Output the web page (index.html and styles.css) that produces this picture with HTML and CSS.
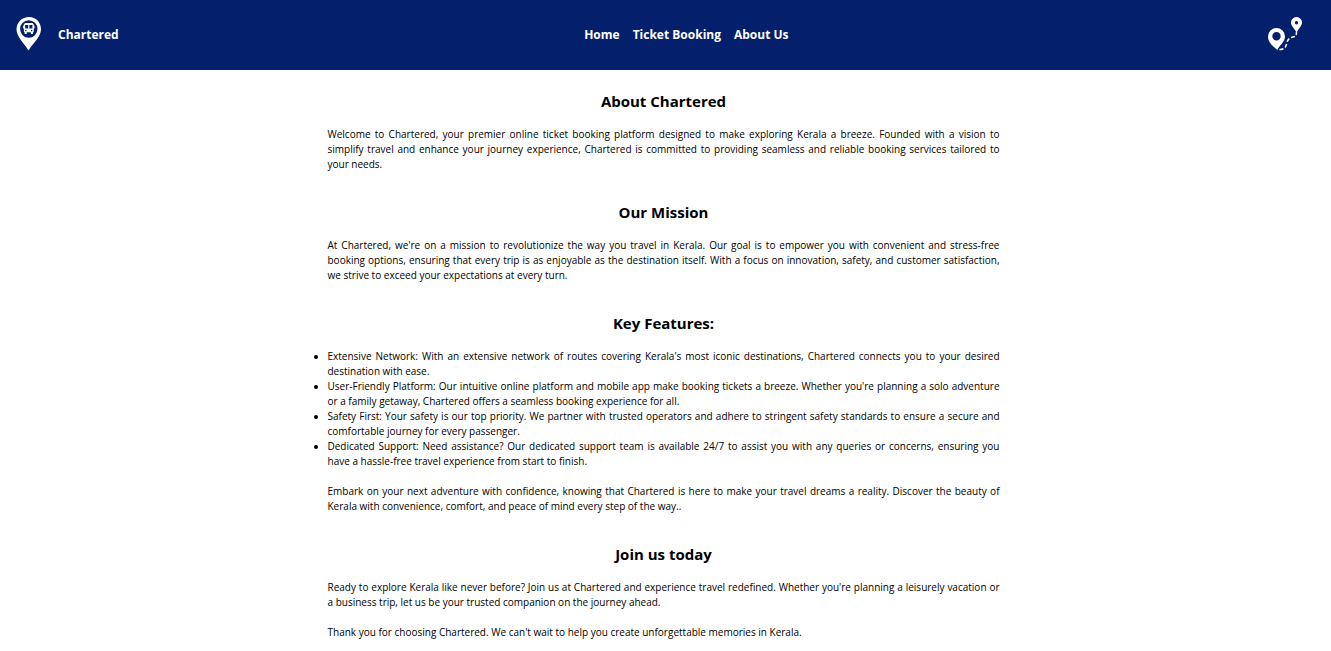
FILE: index.html
```html
<!DOCTYPE html>
<html lang="en">
<head>
<meta charset="utf-8">
<meta name="viewport" content="width=device-width, initial-scale=1">
<title>About Chartered</title>
<link rel="stylesheet" href="styles.css">
</head>
<body>
<header class="topbar">
  <a class="brand" href="#">
    <svg class="brand-icon" viewBox="0 0 26 34" aria-hidden="true">
      <path fill="#fff" fill-rule="evenodd" d="M13 0C6 0 .5 5.500 .5 12.300C.5 20 8 26 12.500 33.500C17 26 25 20 25 12.300C25 5.500 20 0 13 0ZM12.800 3.300a8.700 8.700 0 1 1 0 17.400a8.700 8.700 0 1 1 0-17.400Z"/>
      <path fill="#fff" fill-rule="evenodd" d="M9.200 6h7.200l1.300 1.200v1.300h.8v3h-.8v3.700h-.8V17h-2v-1.700h-4.200V17h-2v-1.800h-.8v-3.700h-.8v-3h.8V7.200ZM9.200 8v3.500h3V8ZM13.400 8v3.500h3V8ZM9.200 13v1.200h1.300V13ZM15 13v1.200h1.300V13Z"/>
    </svg>
    <span>Chartered</span>
  </a>
  <nav class="links">
    <a href="#">Home</a>
    <a href="#">Ticket Booking</a>
    <a href="#">About Us</a>
  </nav>
  <div class="route">
    <svg class="route-icon" viewBox="0 0 36 34" aria-hidden="true">
      <path fill="#fff" fill-rule="evenodd" d="M28.500 0a5.600 5.600 0 0 1 5.600 5.600C34.100 9 30 12 28.600 16C27 12 22.900 9 22.900 5.600A5.600 5.600 0 0 1 28.500 0ZM28.500 4a1.700 1.700 0 1 0 0 3.400a1.700 1.700 0 0 0 0-3.400Z"/>
      <path fill="#fff" fill-rule="evenodd" d="M8.500 11a8.500 8.500 0 0 1 8.500 8.500C17 25 11 28.500 9.500 33C4.500 29.500 0 25 0 19.500A8.500 8.500 0 0 1 8.500 11ZM8.500 15a4.200 4.200 0 1 0 0 8.400a4.200 4.200 0 0 0 0-8.400Z"/>
      <path fill="none" stroke="#fff" stroke-width="1.500" stroke-dasharray="4 2" d="M11.500 32.500C17 32.500 18 29.500 18.500 27C19.500 22 22 20.500 25 20C28 19.500 28.500 18 28.500 15"/>
    </svg>
  </div>
</header>
<main class="content">
  <section>
    <h2>About Chartered</h2>
    <p>Welcome to Chartered, your premier online ticket booking platform designed to make exploring Kerala a breeze. Founded with a vision to simplify travel and enhance your journey experience, Chartered is committed to providing seamless and reliable booking services tailored to your needs.</p>
  </section>
  <section>
    <h2>Our Mission</h2>
    <p>At Chartered, we're on a mission to revolutionize the way you travel in Kerala. Our goal is to empower you with convenient and stress-free booking options, ensuring that every trip is as enjoyable as the destination itself. With a focus on innovation, safety, and customer satisfaction, we strive to exceed your expectations at every turn.</p>
  </section>
  <section>
    <h2>Key Features:</h2>
    <ul>
      <li>Extensive Network: With an extensive network of routes covering Kerala's most iconic destinations, Chartered connects you to your desired destination with ease.</li>
      <li>User-Friendly Platform: Our intuitive online platform and mobile app make booking tickets a breeze. Whether you're planning a solo adventure or a family getaway, Chartered offers a seamless booking experience for all.</li>
      <li>Safety First: Your safety is our top priority. We partner with trusted operators and adhere to stringent safety standards to ensure a secure and comfortable journey for every passenger.</li>
      <li>Dedicated Support: Need assistance? Our dedicated support team is available 24/7 to assist you with any queries or concerns, ensuring you have a hassle-free travel experience from start to finish.</li>
    </ul>
    <p>Embark on your next adventure with confidence, knowing that Chartered is here to make your travel dreams a reality. Discover the beauty of Kerala with convenience, comfort, and peace of mind every step of the way..</p>
  </section>
  <section>
    <h2>Join us today</h2>
    <p>Ready to explore Kerala like never before? Join us at Chartered and experience travel redefined. Whether you're planning a leisurely vacation or a business trip, let us be your trusted companion on the journey ahead.</p>
    <p>Thank you for choosing Chartered. We can't wait to help you create unforgettable memories in Kerala.</p>
  </section>
</main>
</body>
</html>
```
FILE: styles.css
```css
* {
  box-sizing: border-box;
  margin: 0;
  padding: 0;
}

body {
  background: #fff;
  color: #000;
  font-family: "Open Sans", "Noto Sans", sans-serif;
  font-size: 10px;
  line-height: 15px;
}

.topbar {
  display: flex;
  justify-content: space-between;
  align-items: center;
  padding: 17px 14px 19px 16px;
  background: #04206c;
  color: #fff;
  font-size: 12px;
  font-weight: 700;
}

.topbar a {
  color: inherit;
  text-decoration: none;
}

.topbar .brand {
  display: flex;
  align-items: center;
  gap: 16px;
}

.brand-icon {
  width: 26px;
  height: 34px;
}

.links {
  display: flex;
  gap: 13px;
}

.route {
  display: flex;
  padding: 0 13px 0 14px;
}

.route-icon {
  width: 36px;
  height: 34px;
}

.content {
  max-width: 676px;
  margin: 0 auto;
  padding: 20px 4px 11px 0;
}

section + section {
  margin-top: 29px;
}

h2 {
  margin-bottom: 15px;
  font-size: 15px;
  line-height: 22px;
  text-align: center;
}

p,
li {
  text-align: justify;
}

p + p,
ul + p {
  margin-top: 15px;
}
```
